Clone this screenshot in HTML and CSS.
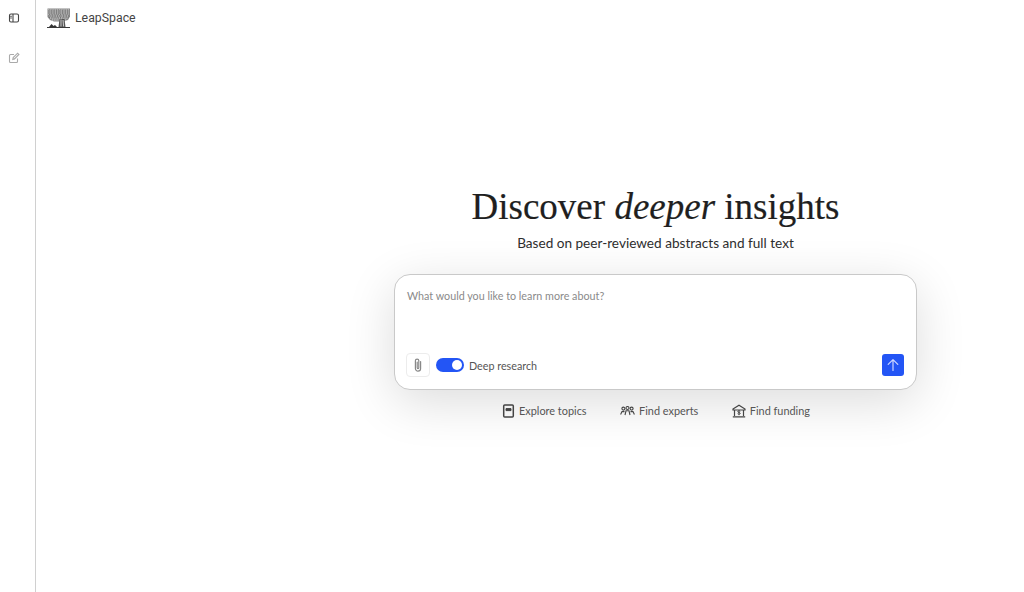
FILE: index.html
```html
<!DOCTYPE html>
<html>
  <head>
    <meta charset="utf-8">
    <title>LeapSpace</title>
    <link rel="stylesheet" href="styles.css">
  </head>
  <body>
    <nav class="sidebar">
      <svg class="side-icon" width="12" height="12" viewBox="0 0 12 12" fill="none" stroke="#444" stroke-width="1.1">
        <rect x="1.500" y="2" width="9" height="8" rx="1.500"/>
        <path d="M5 2v8"/>
        <path d="M2 4.300h2M2 6h2" stroke-width="0.8"/>
      </svg>
      <svg class="side-icon edit" width="12" height="12" viewBox="0 0 12 12" fill="none" stroke="#aaa" stroke-width="1.1">
        <path d="M6 2.500H2.500a1 1 0 0 0-1 1v6a1 1 0 0 0 1 1h6a1 1 0 0 0 1-1V6.500"/>
        <path d="M4.800 7.400l.4-1.800L9.600 1.200l1.300 1.300-4.400 4.400z"/>
      </svg>
    </nav>
    <div class="main">
      <header class="brand">
        <svg class="logo" width="25" height="22" viewBox="0 0 25 22">
          <path d="M1.500 1.500h22.500v8l-2 3.500-5 1.500H8l-4-1.500-2.500-3z" fill="#888"/>
          <path d="M2 3h21M2 5h21M2 7h21M3 9h20M4 11h18M6 13h14" stroke="#eee" stroke-width="0.8" stroke-dasharray="1.300 0.900"/>
          <path d="M2 4h21M2 6h21M3 8h20M3 10h20" stroke="#333" stroke-width="0.6" stroke-dasharray="0.800 2"/>
          <path d="M13.500 12h5l1 8h-7z" fill="#555"/>
          <path d="M15 12.500v7M17 13l.6 6.500" stroke="#fff" stroke-width="0.7"/>
          <path d="M3 20l2.500-3 2 2 1.500-1 2 2z" fill="#333"/>
          <path d="M1 20.500h23" stroke="#222" stroke-width="0.9"/>
        </svg>
        <span class="brand-name">LeapSpace</span>
      </header>
      <section class="center">
        <h1 class="title">Discover <em>deeper</em> insights</h1>
        <p class="subtitle">Based on peer-reviewed abstracts and full text</p>
        <div class="search-box">
          <div class="placeholder">What would you like to learn more about?</div>
          <div class="search-tools">
            <button class="attach">
              <svg width="12" height="16" viewBox="0 0 12 16" fill="none" stroke="#888" stroke-width="1.2" stroke-linecap="round">
                <path d="M8.600 4.500v7a2.600 2.600 0 0 1-5.200 0V3.800a1.700 1.700 0 0 1 3.400 0v7a.8.8 0 0 1-1.600 0V5"/>
              </svg>
            </button>
            <span class="toggle"><span class="knob"></span></span>
            <span class="toggle-label">Deep research</span>
            <button class="send">
              <svg width="14" height="14" viewBox="0 0 14 14" fill="none" stroke="#cdd6ff" stroke-width="1.2" stroke-linecap="round" stroke-linejoin="round">
                <path d="M7 12.500V1.800M2.200 6.400L7 1.600l4.800 4.800"/>
              </svg>
            </button>
          </div>
        </div>
        <div class="links">
          <a class="link">
            <svg width="13" height="14" viewBox="0 0 12 14" fill="none" stroke="#444" stroke-width="1.500">
              <rect x="1.200" y="1" width="9.600" height="12" rx="1"/>
              <path d="M3.500 4.600h5v2h-5z" fill="#444" stroke-width="1"/>
            </svg>
            Explore topics
          </a>
          <a class="link">
            <svg width="15" height="10" viewBox="0 0 15 10" fill="none" stroke="#444" stroke-width="1.100">
              <circle cx="3.400" cy="2.600" r="1.500"/>
              <circle cx="7.500" cy="2" r="1.500"/>
              <circle cx="11.600" cy="2.600" r="1.500"/>
              <path d="M.6 8.600l1.400-3h2.500M5 9l1-4.200h3L10 9M14.400 8.600L13 5.600h-2.500"/>
            </svg>
            Find experts
          </a>
          <a class="link">
            <svg width="14" height="14" viewBox="0 0 14 14" fill="none" stroke="#444" stroke-width="1.200">
              <path d="M1 5l6-3.800L13 5v1H1zM2.500 6v6M11.500 6v6M.8 12.800h12.400"/>
              <path d="M8.300 7.300c-.5-.6-2.600-.7-2.600.4 0 1.100 2.600.6 2.600 1.700 0 1-2 1-2.700.3M7 6.300v4.900" stroke-width="0.900"/>
            </svg>
            Find funding
          </a>
        </div>
      </section>
    </div>
  </body>
</html>
```

FILE: styles.css
```css
html,
body {
  margin: 0;
  height: 100%;
}

body {
  display: flex;
  height: 592px;
  overflow: hidden;
  background: #fff;
  font-family: "Lato", "Liberation Sans", sans-serif;
  color: #333;
}

.sidebar {
  width: 35px;
  border-right: 1px solid #d0d0d0;
  display: flex;
  flex-direction: column;
  align-items: center;
  padding-top: 12px;
  flex-shrink: 0;
}

.side-icon {
  margin-left: -8px;
}

.edit {
  margin-top: 28px;
}

.main {
  flex: 1;
  display: flex;
  flex-direction: column;
}

.brand {
  display: flex;
  align-items: center;
  gap: 4px;
  padding: 6px 0 0 10px;
  height: 24px;
}

.brand-name {
  font-family: "Roboto", sans-serif;
  font-size: 12.3px;
  color: #444;
}

.center {
  margin-left: 358px;
  width: 523px;
  margin-top: 155px;
  display: flex;
  flex-direction: column;
  align-items: center;
}

.title {
  margin: 0;
  font-family: "Liberation Serif", serif;
  font-weight: 400;
  font-size: 37px;
  line-height: 44px;
  color: #1f1f1f;
  white-space: nowrap;
  -webkit-text-stroke: 0.2px #1f1f1f;
}

.subtitle {
  margin: 5px 0 0;
  font-size: 13.6px;
  line-height: 18px;
  color: #2e2e2e;
}

.search-box {
  box-sizing: border-box;
  width: 523px;
  height: 116px;
  margin-top: 22px;
  padding: 14px 12px 12px;
  border: 1px solid #c9c9c9;
  border-radius: 16px;
  background: #fff;
  box-shadow: 0 12px 50px rgba(0, 0, 0, 0.14);
  display: flex;
  flex-direction: column;
  justify-content: space-between;
}

.placeholder {
  font-size: 10.75px;
  line-height: 14px;
  color: #8a8a8a;
}

.search-tools {
  display: flex;
  align-items: center;
}

.attach {
  width: 24px;
  height: 24px;
  margin-left: -1px;
  padding: 0;
  border: 1px solid #ececec;
  border-radius: 4px;
  background: #fff;
  display: flex;
  align-items: center;
  justify-content: center;
}

.toggle {
  width: 28px;
  height: 14px;
  margin-left: 6px;
  border-radius: 7px;
  background: #2355f5;
  display: flex;
  align-items: center;
  justify-content: flex-end;
  padding-right: 2px;
  box-sizing: border-box;
}

.knob {
  width: 10px;
  height: 10px;
  border-radius: 50%;
  background: #fff;
}

.toggle-label {
  margin-left: 5px;
  font-size: 10.75px;
  color: #555;
}

.send {
  width: 22px;
  height: 22px;
  margin-left: auto;
  padding: 0;
  border: 0;
  border-radius: 3px;
  background: #2355f5;
  display: flex;
  align-items: center;
  justify-content: center;
}

.links {
  display: flex;
  gap: 33.5px;
  margin-top: 13px;
  margin-left: 1px;
}

.link {
  display: flex;
  align-items: center;
  gap: 4px;
  font-size: 10.9px;
  line-height: 16px;
  color: #555;
}
```
